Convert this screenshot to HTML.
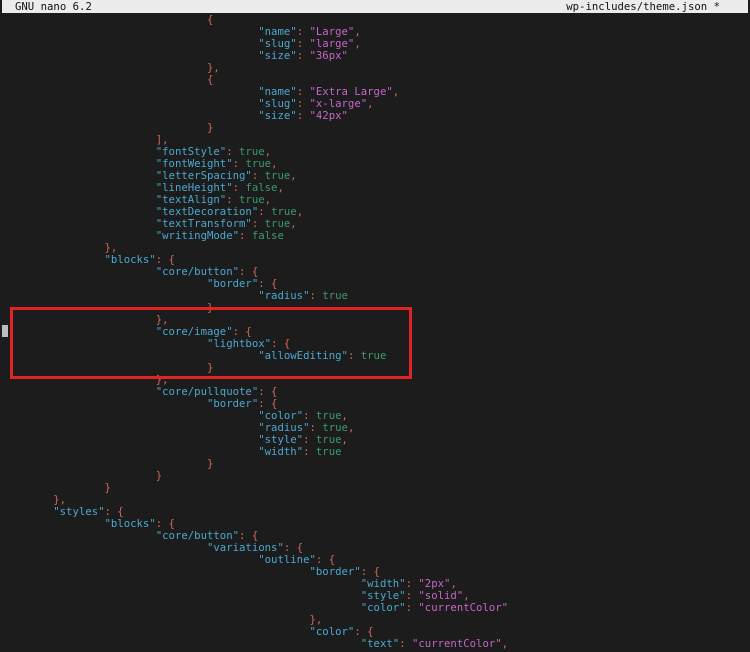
<!DOCTYPE html>
<html><head><meta charset="utf-8"><style>
html,body{margin:0;padding:0;background:#1c1c1c;width:750px;height:652px;overflow:hidden}
#bar{position:absolute;left:2px;top:0;width:746px;height:13px;background:#ececec;color:#111;font:10.65px/13px "DejaVu Sans Mono","Liberation Mono",monospace}
#bar .l{position:absolute;left:13px;top:0;white-space:pre}
#bar .r{position:absolute;right:28px;top:0;white-space:pre}
pre{position:absolute;left:2px;top:14px;margin:0;font:10.65px/12px "DejaVu Sans Mono","Liberation Mono",monospace;color:#d06a5a;white-space:pre}
.k{color:#4aa8d0}.s{color:#c864c8}.b{color:#3c9a6a}
#box{position:absolute;left:10px;top:307px;width:396px;height:66px;border:3px solid #e02424}
#cur{position:absolute;left:2px;top:325px;width:6px;height:12px;background:#bcbcbc}
</style></head><body>
<div id="bar"><span class="l">GNU nano 6.2</span><span class="r">wp-includes/theme.json *</span></div>
<pre>                                {
                                        <span class="k">"name"</span>: <span class="s">"Large"</span>,
                                        <span class="k">"slug"</span>: <span class="s">"large"</span>,
                                        <span class="k">"size"</span>: <span class="s">"36px"</span>
                                },
                                {
                                        <span class="k">"name"</span>: <span class="s">"Extra Large"</span>,
                                        <span class="k">"slug"</span>: <span class="s">"x-large"</span>,
                                        <span class="k">"size"</span>: <span class="s">"42px"</span>
                                }
                        ],
                        <span class="k">"fontStyle"</span>: <span class="b">true</span>,
                        <span class="k">"fontWeight"</span>: <span class="b">true</span>,
                        <span class="k">"letterSpacing"</span>: <span class="b">true</span>,
                        <span class="k">"lineHeight"</span>: <span class="b">false</span>,
                        <span class="k">"textAlign"</span>: <span class="b">true</span>,
                        <span class="k">"textDecoration"</span>: <span class="b">true</span>,
                        <span class="k">"textTransform"</span>: <span class="b">true</span>,
                        <span class="k">"writingMode"</span>: <span class="b">false</span>
                },
                <span class="k">"blocks"</span>: {
                        <span class="k">"core/button"</span>: {
                                <span class="k">"border"</span>: {
                                        <span class="k">"radius"</span>: <span class="b">true</span>
                                }
                        },
                        <span class="k">"core/image"</span>: {
                                <span class="k">"lightbox"</span>: {
                                        <span class="k">"allowEditing"</span>: <span class="b">true</span>
                                }
                        },
                        <span class="k">"core/pullquote"</span>: {
                                <span class="k">"border"</span>: {
                                        <span class="k">"color"</span>: <span class="b">true</span>,
                                        <span class="k">"radius"</span>: <span class="b">true</span>,
                                        <span class="k">"style"</span>: <span class="b">true</span>,
                                        <span class="k">"width"</span>: <span class="b">true</span>
                                }
                        }
                }
        },
        <span class="k">"styles"</span>: {
                <span class="k">"blocks"</span>: {
                        <span class="k">"core/button"</span>: {
                                <span class="k">"variations"</span>: {
                                        <span class="k">"outline"</span>: {
                                                <span class="k">"border"</span>: {
                                                        <span class="k">"width"</span>: <span class="s">"2px"</span>,
                                                        <span class="k">"style"</span>: <span class="s">"solid"</span>,
                                                        <span class="k">"color"</span>: <span class="s">"currentColor"</span>
                                                },
                                                <span class="k">"color"</span>: {
                                                        <span class="k">"text"</span>: <span class="s">"currentColor"</span>,
</pre>
<div id="box"></div>
<div id="cur"></div>
</body></html>
